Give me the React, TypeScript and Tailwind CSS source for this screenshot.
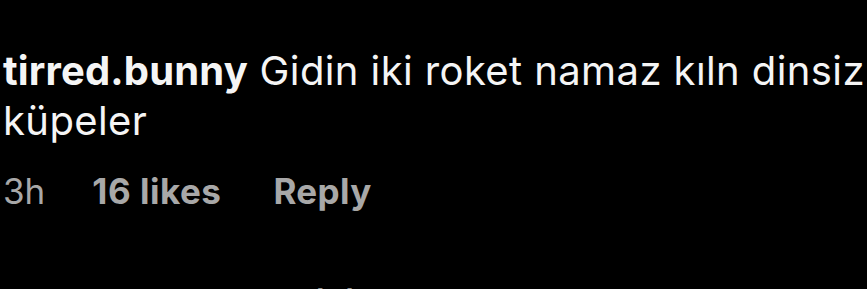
export default function App() {
  return (
    <div className="w-[867px] h-[289px] bg-black overflow-hidden pl-[3px] pt-[46px] font-['Inter',sans-serif]">
      <p className="w-[864px] text-[40px] leading-[50px] tracking-[0.4px] text-[#f5f5f5]">
        <span className="font-bold tracking-[0.15px]">tirred.bunny</span> Gidin iki roket namaz kıln dinsiz küpeler
      </p>
      <div className="mt-[23px] flex items-center text-[35px] leading-[45px] text-[#a8a8a8]">
        <span>3h</span>
        <span className="ml-[47px] font-bold tracking-[0.5px]">16 likes</span>
        <span className="ml-[52px] font-bold tracking-[0.4px]">Reply</span>
      </div>
      <div className="mt-[68px] pl-[92px] text-[35px] leading-[45px] text-[#a8a8a8] font-semibold">
        View replies (3)
      </div>
    </div>
  );
}
